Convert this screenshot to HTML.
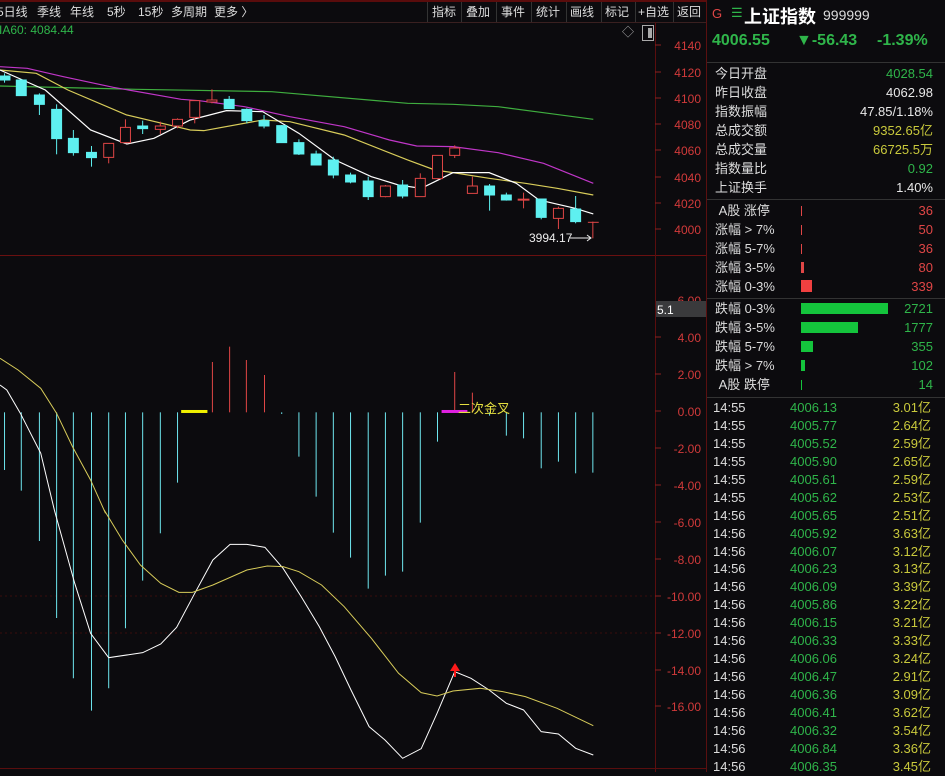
<!DOCTYPE html>
<html><head><meta charset="utf-8"><style>
*{margin:0;padding:0;box-sizing:border-box}
body{width:945px;height:772px;background:#0c0b0e;overflow:hidden;position:relative;font-family:"Liberation Sans","Noto Sans CJK SC",sans-serif;color:#ddd}
.a{position:absolute;white-space:nowrap}
svg{position:absolute;left:0;top:0}
svg rect{vector-effect:non-scaling-stroke}
.rp{position:absolute;left:706px;top:0;width:239px;height:772px;border-left:1px solid #5a1010;background:#0c0b0e}
.row{position:absolute;left:8px;width:218px;height:19px;font-size:13px;line-height:19px}
.row .v{position:absolute;right:0;top:0}
.g{color:#2fb54a}.r{color:#e04646}.y{color:#c9c93c}.w{color:#e8e8e8}
.bar{position:absolute;left:86px}
</style></head><body>
<svg width="945" height="772" viewBox="0 0 945 772">
<rect x="0" y="0" width="945" height="2" fill="#5a0c0c"/>
<line x1="0" y1="22.5" x2="706" y2="22.5" stroke="#3a2020"/>
<line x1="0" y1="255.5" x2="706" y2="255.5" stroke="#6a1010"/>
<line x1="655.5" y1="22" x2="655.5" y2="772" stroke="#5a0e0e"/>
<line x1="0" y1="768.5" x2="706" y2="768.5" stroke="#5a0e0e"/>
<line x1="0" y1="596" x2="655" y2="596" stroke="#3a0c0c" stroke-dasharray="2,3"/>
<line x1="0" y1="633" x2="655" y2="633" stroke="#3a0c0c" stroke-dasharray="2,3"/>
<g stroke="#333">
<line x1="427.5" y1="2" x2="427.5" y2="22"/><line x1="461.5" y1="2" x2="461.5" y2="22"/><line x1="496.5" y1="2" x2="496.5" y2="22"/><line x1="531.5" y1="2" x2="531.5" y2="22"/><line x1="566.5" y1="2" x2="566.5" y2="22"/><line x1="601.5" y1="2" x2="601.5" y2="22"/><line x1="635.5" y1="2" x2="635.5" y2="22"/><line x1="673.5" y1="2" x2="673.5" y2="22"/>
</g>
<g stroke="#8a2020">
<line x1="655" y1="45" x2="661" y2="45"/><line x1="655" y1="72" x2="661" y2="72"/><line x1="655" y1="98" x2="661" y2="98"/><line x1="655" y1="124" x2="661" y2="124"/><line x1="655" y1="150" x2="661" y2="150"/><line x1="655" y1="177" x2="661" y2="177"/><line x1="655" y1="203" x2="661" y2="203"/><line x1="655" y1="229" x2="661" y2="229"/>
<line x1="655" y1="337" x2="661" y2="337"/><line x1="655" y1="374" x2="661" y2="374"/><line x1="655" y1="411" x2="661" y2="411"/><line x1="655" y1="448" x2="661" y2="448"/><line x1="655" y1="485" x2="661" y2="485"/><line x1="655" y1="522" x2="661" y2="522"/><line x1="655" y1="559" x2="661" y2="559"/><line x1="655" y1="596" x2="661" y2="596"/><line x1="655" y1="633" x2="661" y2="633"/><line x1="655" y1="670" x2="661" y2="670"/><line x1="655" y1="706" x2="661" y2="706"/>
</g>
<g font-size="12" fill="#d23a3a" text-anchor="end" font-family="Liberation Sans, sans-serif">
<text x="701" y="50">4140</text><text x="701" y="77">4120</text><text x="701" y="103">4100</text><text x="701" y="129">4080</text><text x="701" y="155">4060</text><text x="701" y="182">4040</text><text x="701" y="208">4020</text><text x="701" y="234">4000</text>
<text x="701" y="305">6.00</text><text x="701" y="342">4.00</text><text x="701" y="379">2.00</text><text x="701" y="416">0.00</text><text x="701" y="453">-2.00</text><text x="701" y="490">-4.00</text><text x="701" y="527">-6.00</text><text x="701" y="564">-8.00</text><text x="701" y="601">-10.00</text><text x="701" y="638">-12.00</text><text x="701" y="675">-14.00</text><text x="701" y="711">-16.00</text>
</g>
<rect x="656" y="301" width="50" height="16" fill="#3a3a3c"/>
<text x="657" y="314" font-size="12" fill="#fff">5.1</text>
<text x="622" y="36" font-size="12" fill="#aaa">◇</text>
<rect x="642.5" y="25.5" width="11" height="15" fill="none" stroke="#aaa"/><rect x="648" y="28" width="4" height="10" fill="#aaa"/>

<g transform="translate(0,60) scale(0.4529,0.3333)">
<g fill="none" stroke-width="1.2">
<polyline vector-effect="non-scaling-stroke" stroke="#3fae3f" points="0,78 300,88 600,95 900,130 1000,133 1100,140 1200,158 1310,178"/>
<polyline vector-effect="non-scaling-stroke" stroke="#c036c8" points="0,20 60,25 140,50 250,82 400,118 440,122 540,140 640,170 760,200 860,240 920,258 1000,260 1100,278 1200,310 1310,370"/>
<polyline vector-effect="non-scaling-stroke" stroke="#d8cc5a" points="0,30 80,40 150,90 280,165 420,210 450,212 580,180 640,185 760,225 900,300 960,330 1000,338 1080,355 1160,370 1230,385 1310,405"/>
<polyline vector-effect="non-scaling-stroke" stroke="#fff" points="0,30 100,90 200,210 280,252 340,235 420,180 500,152 580,155 660,220 740,300 820,350 880,375 930,385 960,365 1000,338 1080,338 1140,370 1190,420 1270,445 1310,462"/>
</g>
<g stroke="#5ef0f0" fill="#5ef0f0">
<line vector-effect="non-scaling-stroke" x1="10" y1="40" x2="10" y2="68"/><rect x="0" y="48" width="22" height="12"/>
<line vector-effect="non-scaling-stroke" x1="47" y1="58" x2="47" y2="107"/><rect x="36" y="60" width="22" height="47"/>
<line vector-effect="non-scaling-stroke" x1="87" y1="100" x2="87" y2="165"/><rect x="76" y="105" width="22" height="28"/>
<line vector-effect="non-scaling-stroke" x1="125" y1="133" x2="125" y2="283"/><rect x="114" y="148" width="22" height="88"/>
<line vector-effect="non-scaling-stroke" x1="162" y1="210" x2="162" y2="287"/><rect x="151" y="235" width="22" height="43"/>
<line vector-effect="non-scaling-stroke" x1="202" y1="258" x2="202" y2="320"/><rect x="191" y="277" width="22" height="16"/>
<line vector-effect="non-scaling-stroke" x1="315" y1="182" x2="315" y2="222"/><rect x="304" y="198" width="22" height="8"/>
<line vector-effect="non-scaling-stroke" x1="506" y1="108" x2="506" y2="146"/><rect x="495" y="118" width="22" height="28"/>
<line vector-effect="non-scaling-stroke" x1="545" y1="145" x2="545" y2="190"/><rect x="534" y="148" width="22" height="34"/>
<line vector-effect="non-scaling-stroke" x1="583" y1="165" x2="583" y2="205"/><rect x="572" y="182" width="22" height="16"/>
<line vector-effect="non-scaling-stroke" x1="622" y1="195" x2="622" y2="248"/><rect x="611" y="197" width="22" height="51"/>
<line vector-effect="non-scaling-stroke" x1="660" y1="238" x2="660" y2="285"/><rect x="649" y="248" width="22" height="34"/>
<line vector-effect="non-scaling-stroke" x1="698" y1="272" x2="698" y2="315"/><rect x="687" y="282" width="22" height="33"/>
<line vector-effect="non-scaling-stroke" x1="736" y1="290" x2="736" y2="355"/><rect x="725" y="300" width="22" height="45"/>
<line vector-effect="non-scaling-stroke" x1="774" y1="338" x2="774" y2="370"/><rect x="763" y="345" width="22" height="21"/>
<line vector-effect="non-scaling-stroke" x1="813" y1="350" x2="813" y2="420"/><rect x="802" y="363" width="22" height="47"/>
<line vector-effect="non-scaling-stroke" x1="889" y1="360" x2="889" y2="415"/><rect x="878" y="375" width="22" height="33"/>
<line vector-effect="non-scaling-stroke" x1="1081" y1="372" x2="1081" y2="452"/><rect x="1070" y="378" width="22" height="27"/>
<line vector-effect="non-scaling-stroke" x1="1118" y1="398" x2="1118" y2="422"/><rect x="1107" y="405" width="22" height="15"/>
<line vector-effect="non-scaling-stroke" x1="1195" y1="417" x2="1195" y2="478"/><rect x="1184" y="417" width="22" height="55"/>
<line vector-effect="non-scaling-stroke" x1="1271" y1="408" x2="1271" y2="490"/><rect x="1260" y="447" width="22" height="38"/>
</g>
<g stroke="#e04646" fill="#0c0b0e">
<line vector-effect="non-scaling-stroke" x1="240" y1="250" x2="240" y2="310"/><rect x="229" y="250" width="22" height="42"/>
<line vector-effect="non-scaling-stroke" x1="277" y1="178" x2="277" y2="250"/><rect x="266" y="202" width="22" height="46"/>
<line vector-effect="non-scaling-stroke" x1="354" y1="185" x2="354" y2="222"/><rect x="343" y="198" width="22" height="10"/>
<line vector-effect="non-scaling-stroke" x1="392" y1="175" x2="392" y2="205"/><rect x="381" y="178" width="22" height="20"/>
<line vector-effect="non-scaling-stroke" x1="430" y1="122" x2="430" y2="190"/><rect x="419" y="122" width="22" height="50"/>
<line vector-effect="non-scaling-stroke" x1="468" y1="88" x2="468" y2="130"/><rect x="457" y="120" width="22" height="6"/>
<line vector-effect="non-scaling-stroke" x1="851" y1="375" x2="851" y2="412"/><rect x="840" y="378" width="22" height="32"/>
<line vector-effect="non-scaling-stroke" x1="928" y1="340" x2="928" y2="410"/><rect x="917" y="355" width="22" height="55"/>
<line vector-effect="non-scaling-stroke" x1="966" y1="286" x2="966" y2="356"/><rect x="955" y="286" width="22" height="70"/>
<line vector-effect="non-scaling-stroke" x1="1004" y1="256" x2="1004" y2="294"/><rect x="993" y="264" width="22" height="22"/>
<line vector-effect="non-scaling-stroke" x1="1043" y1="350" x2="1043" y2="400"/><rect x="1032" y="378" width="22" height="22"/>
<line vector-effect="non-scaling-stroke" x1="1156" y1="398" x2="1156" y2="445"/><line vector-effect="non-scaling-stroke" x1="1143" y1="419" x2="1169" y2="419" stroke-width="2"/>
<line vector-effect="non-scaling-stroke" x1="1233" y1="440" x2="1233" y2="507"/><rect x="1222" y="445" width="22" height="30"/>
<line vector-effect="non-scaling-stroke" x1="1309" y1="485" x2="1309" y2="535"/><line vector-effect="non-scaling-stroke" x1="1298" y1="487" x2="1322" y2="487"/>
</g>
</g>
<text x="529" y="242" font-size="12" fill="#eee">3994.17</text>
<path d="M570 238 H591 M587 235 L591 238 L587 241" stroke="#eee" fill="none"/>

<g transform="translate(0,250) scale(0.4529,0.3333)">
<g stroke="#6ee6ee" stroke-width="1" >
<line vector-effect="non-scaling-stroke" x1="10" y1="487" x2="10" y2="660"/>
<line vector-effect="non-scaling-stroke" x1="47" y1="487" x2="47" y2="722"/>
<line vector-effect="non-scaling-stroke" x1="87" y1="487" x2="87" y2="873"/>
<line vector-effect="non-scaling-stroke" x1="125" y1="487" x2="125" y2="1104"/>
<line vector-effect="non-scaling-stroke" x1="162" y1="487" x2="162" y2="1285"/>
<line vector-effect="non-scaling-stroke" x1="202" y1="487" x2="202" y2="1382"/>
<line vector-effect="non-scaling-stroke" x1="240" y1="487" x2="240" y2="1315"/>
<line vector-effect="non-scaling-stroke" x1="277" y1="487" x2="277" y2="1135"/>
<line vector-effect="non-scaling-stroke" x1="315" y1="487" x2="315" y2="992"/>
<line vector-effect="non-scaling-stroke" x1="354" y1="487" x2="354" y2="850"/>
<line vector-effect="non-scaling-stroke" x1="392" y1="487" x2="392" y2="698"/>
<line vector-effect="non-scaling-stroke" x1="622" y1="487" x2="622" y2="492"/>
<line vector-effect="non-scaling-stroke" x1="660" y1="487" x2="660" y2="620"/>
<line vector-effect="non-scaling-stroke" x1="698" y1="487" x2="698" y2="740"/>
<line vector-effect="non-scaling-stroke" x1="736" y1="487" x2="736" y2="848"/>
<line vector-effect="non-scaling-stroke" x1="774" y1="487" x2="774" y2="923"/>
<line vector-effect="non-scaling-stroke" x1="813" y1="487" x2="813" y2="1016"/>
<line vector-effect="non-scaling-stroke" x1="851" y1="487" x2="851" y2="977"/>
<line vector-effect="non-scaling-stroke" x1="889" y1="487" x2="889" y2="965"/>
<line vector-effect="non-scaling-stroke" x1="928" y1="487" x2="928" y2="818"/>
<line vector-effect="non-scaling-stroke" x1="966" y1="487" x2="966" y2="575"/>
<line vector-effect="non-scaling-stroke" x1="1081" y1="487" x2="1081" y2="497"/>
<line vector-effect="non-scaling-stroke" x1="1118" y1="487" x2="1118" y2="557"/>
<line vector-effect="non-scaling-stroke" x1="1156" y1="487" x2="1156" y2="565"/>
<line vector-effect="non-scaling-stroke" x1="1195" y1="487" x2="1195" y2="655"/>
<line vector-effect="non-scaling-stroke" x1="1233" y1="487" x2="1233" y2="635"/>
<line vector-effect="non-scaling-stroke" x1="1271" y1="487" x2="1271" y2="670"/>
<line vector-effect="non-scaling-stroke" x1="1309" y1="487" x2="1309" y2="668"/>
</g>
<g stroke="#e04646">
<line vector-effect="non-scaling-stroke" x1="469" y1="487" x2="469" y2="336"/>
<line vector-effect="non-scaling-stroke" x1="507" y1="487" x2="507" y2="290"/>
<line vector-effect="non-scaling-stroke" x1="544" y1="487" x2="544" y2="330"/>
<line vector-effect="non-scaling-stroke" x1="584" y1="487" x2="584" y2="375"/>
<line vector-effect="non-scaling-stroke" x1="1004" y1="487" x2="1004" y2="366"/>
<line vector-effect="non-scaling-stroke" x1="1043" y1="487" x2="1043" y2="428"/>
</g>
<rect x="400" y="480" width="58" height="9" fill="#f0f000"/>
<rect x="975" y="480" width="57" height="9" fill="#e020e0"/>
<polyline vector-effect="non-scaling-stroke" fill="none" stroke="#fff" points="0,405 15,420 45,490 90,610 120,780"/>
<polyline vector-effect="non-scaling-stroke" fill="none" stroke="#d8cc5a" points="0,325 40,360 90,415 125,490 160,590 200,690 233,790"/>
</g>
<text x="458" y="413" font-size="13" fill="#e6e040" font-family="Liberation Sans, Noto Sans CJK SC, sans-serif">二次金叉</text>
<g transform="translate(0,510) scale(0.4529,0.3333)">
<polyline vector-effect="non-scaling-stroke" fill="none" stroke="#fff" points="120,0 165,220 200,370 240,443 315,428 355,402 390,352 430,250 470,150 508,103 545,103 585,112 625,175 665,260 705,350 740,440 775,540 815,650 850,690 889,745 930,716 965,610 1004,485 1040,505 1080,540 1118,580 1156,600 1195,665 1233,672 1271,715 1310,735"/>
<polyline vector-effect="non-scaling-stroke" fill="none" stroke="#d8cc5a" points="230,0 270,90 310,165 355,220 395,247 425,247 470,225 545,180 590,168 625,170 660,185 710,225 760,290 820,385 880,490 930,548 965,558 1000,543 1060,535 1110,545 1160,560 1230,595 1310,647"/>
</g>
<path d="M455 663 L450 671 L460 671 Z" fill="#ff1a1a"/><line x1="455" y1="670" x2="455" y2="677" stroke="#ff1a1a" stroke-width="2"/>
</svg>

<div class="a" style="left:-3px;top:3px;font-size:12px;color:#ddd">5日线</div>
<div class="a" style="left:37px;top:3px;font-size:12px">季线</div>
<div class="a" style="left:70px;top:3px;font-size:12px">年线</div>
<div class="a" style="left:107px;top:3px;font-size:12px">5秒</div>
<div class="a" style="left:138px;top:3px;font-size:12px">15秒</div>
<div class="a" style="left:171px;top:3px;font-size:12px">多周期</div>
<div class="a" style="left:214px;top:3px;font-size:12px">更多 〉</div>
<div class="a" style="left:432px;top:3px;font-size:12px">指标</div>
<div class="a" style="left:466px;top:3px;font-size:12px">叠加</div>
<div class="a" style="left:501px;top:3px;font-size:12px">事件</div>
<div class="a" style="left:536px;top:3px;font-size:12px">统计</div>
<div class="a" style="left:570px;top:3px;font-size:12px">画线</div>
<div class="a" style="left:605px;top:3px;font-size:12px">标记</div>
<div class="a" style="left:638px;top:3px;font-size:12px">+自选</div>
<div class="a" style="left:677px;top:3px;font-size:12px">返回</div>
<div class="a" style="left:-1px;top:23px;font-size:12px;color:#2fb54a">IA60: 4084.44</div>

<div class="rp">
<div class="a" style="left:5px;top:6px;font-size:13px;color:#e04646">G</div>
<div class="a" style="left:24px;top:5px;font-size:13px;color:#2fb54a">☰</div>
<div class="a" style="left:37px;top:3px;font-size:18px;font-weight:bold;color:#fff">上证指数</div>
<div class="a" style="left:116px;top:7px;font-size:14px;color:#ddd">999999</div>
<div class="a g" style="left:5px;top:32px;font-size:16px;font-weight:bold">4006.55</div>
<div class="a g" style="left:89px;top:32px;font-size:16px;font-weight:bold">▼-56.43</div>
<div class="a g" style="left:170px;top:32px;font-size:16px;font-weight:bold">-1.39%</div>
<div class="a" style="left:0;top:62px;width:239px;height:1px;background:#333"></div>
<div class="row" style="top:64px">今日开盘<span class="v g">4028.54</span></div>
<div class="row" style="top:83px">昨日收盘<span class="v w">4062.98</span></div>
<div class="row" style="top:102px">指数振幅<span class="v w">47.85/1.18%</span></div>
<div class="row" style="top:121px">总成交额<span class="v y">9352.65亿</span></div>
<div class="row" style="top:140px">总成交量<span class="v y">66725.5万</span></div>
<div class="row" style="top:159px">指数量比<span class="v g">0.92</span></div>
<div class="row" style="top:178px">上证换手<span class="v w">1.40%</span></div>
<div class="a" style="left:0;top:199px;width:239px;height:1px;background:#333"></div>
<div class="row" style="top:201px">&nbsp;A股 涨停<span class="bar" style="top:5px;width:1px;height:10px;background:#e04646"></span><span class="v r">36</span></div>
<div class="row" style="top:220px">涨幅 &gt; 7%<span class="bar" style="top:5px;width:1px;height:10px;background:#e04646"></span><span class="v r">50</span></div>
<div class="row" style="top:239px">涨幅 5-7%<span class="bar" style="top:5px;width:1px;height:10px;background:#e04646"></span><span class="v r">36</span></div>
<div class="row" style="top:258px">涨幅 3-5%<span class="bar" style="top:4px;width:3px;height:11px;background:#e04646"></span><span class="v r">80</span></div>
<div class="row" style="top:277px">涨幅 0-3%<span class="bar" style="top:3px;width:11px;height:12px;background:#f04040"></span><span class="v r">339</span></div>
<div class="a" style="left:0;top:298px;width:239px;height:1px;background:#333"></div>
<div class="row" style="top:299px">跌幅 0-3%<span class="bar" style="top:4px;width:87px;height:11px;background:#14c43c"></span><span class="v g">2721</span></div>
<div class="row" style="top:318px">跌幅 3-5%<span class="bar" style="top:4px;width:57px;height:11px;background:#14c43c"></span><span class="v g">1777</span></div>
<div class="row" style="top:337px">跌幅 5-7%<span class="bar" style="top:4px;width:12px;height:11px;background:#14c43c"></span><span class="v g">355</span></div>
<div class="row" style="top:356px">跌幅 &gt; 7%<span class="bar" style="top:4px;width:4px;height:11px;background:#14c43c"></span><span class="v g">102</span></div>
<div class="row" style="top:375px">&nbsp;A股 跌停<span class="bar" style="top:5px;width:1px;height:10px;background:#14c43c"></span><span class="v g">14</span></div>
<div class="a" style="left:0;top:397px;width:239px;height:1px;background:#333"></div>
<div id="t" style="position:absolute;left:0;top:399px;width:239px;font-size:13px;line-height:17.95px">
<div class="row" style="position:relative;left:6px;height:17.95px;line-height:17.95px">14:55<span class="a g" style="left:77px">4006.13</span><span class="v y">3.01亿</span></div>
<div class="row" style="position:relative;left:6px;height:17.95px;line-height:17.95px">14:55<span class="a g" style="left:77px">4005.77</span><span class="v y">2.64亿</span></div>
<div class="row" style="position:relative;left:6px;height:17.95px;line-height:17.95px">14:55<span class="a g" style="left:77px">4005.52</span><span class="v y">2.59亿</span></div>
<div class="row" style="position:relative;left:6px;height:17.95px;line-height:17.95px">14:55<span class="a g" style="left:77px">4005.90</span><span class="v y">2.65亿</span></div>
<div class="row" style="position:relative;left:6px;height:17.95px;line-height:17.95px">14:55<span class="a g" style="left:77px">4005.61</span><span class="v y">2.59亿</span></div>
<div class="row" style="position:relative;left:6px;height:17.95px;line-height:17.95px">14:55<span class="a g" style="left:77px">4005.62</span><span class="v y">2.53亿</span></div>
<div class="row" style="position:relative;left:6px;height:17.95px;line-height:17.95px">14:56<span class="a g" style="left:77px">4005.65</span><span class="v y">2.51亿</span></div>
<div class="row" style="position:relative;left:6px;height:17.95px;line-height:17.95px">14:56<span class="a g" style="left:77px">4005.92</span><span class="v y">3.63亿</span></div>
<div class="row" style="position:relative;left:6px;height:17.95px;line-height:17.95px">14:56<span class="a g" style="left:77px">4006.07</span><span class="v y">3.12亿</span></div>
<div class="row" style="position:relative;left:6px;height:17.95px;line-height:17.95px">14:56<span class="a g" style="left:77px">4006.23</span><span class="v y">3.13亿</span></div>
<div class="row" style="position:relative;left:6px;height:17.95px;line-height:17.95px">14:56<span class="a g" style="left:77px">4006.09</span><span class="v y">3.39亿</span></div>
<div class="row" style="position:relative;left:6px;height:17.95px;line-height:17.95px">14:56<span class="a g" style="left:77px">4005.86</span><span class="v y">3.22亿</span></div>
<div class="row" style="position:relative;left:6px;height:17.95px;line-height:17.95px">14:56<span class="a g" style="left:77px">4006.15</span><span class="v y">3.21亿</span></div>
<div class="row" style="position:relative;left:6px;height:17.95px;line-height:17.95px">14:56<span class="a g" style="left:77px">4006.33</span><span class="v y">3.33亿</span></div>
<div class="row" style="position:relative;left:6px;height:17.95px;line-height:17.95px">14:56<span class="a g" style="left:77px">4006.06</span><span class="v y">3.24亿</span></div>
<div class="row" style="position:relative;left:6px;height:17.95px;line-height:17.95px">14:56<span class="a g" style="left:77px">4006.47</span><span class="v y">2.91亿</span></div>
<div class="row" style="position:relative;left:6px;height:17.95px;line-height:17.95px">14:56<span class="a g" style="left:77px">4006.36</span><span class="v y">3.09亿</span></div>
<div class="row" style="position:relative;left:6px;height:17.95px;line-height:17.95px">14:56<span class="a g" style="left:77px">4006.41</span><span class="v y">3.62亿</span></div>
<div class="row" style="position:relative;left:6px;height:17.95px;line-height:17.95px">14:56<span class="a g" style="left:77px">4006.32</span><span class="v y">3.54亿</span></div>
<div class="row" style="position:relative;left:6px;height:17.95px;line-height:17.95px">14:56<span class="a g" style="left:77px">4006.84</span><span class="v y">3.36亿</span></div>
<div class="row" style="position:relative;left:6px;height:17.95px;line-height:17.95px">14:56<span class="a g" style="left:77px">4006.35</span><span class="v y">3.45亿</span></div>
</div>
</div>
</body></html>
